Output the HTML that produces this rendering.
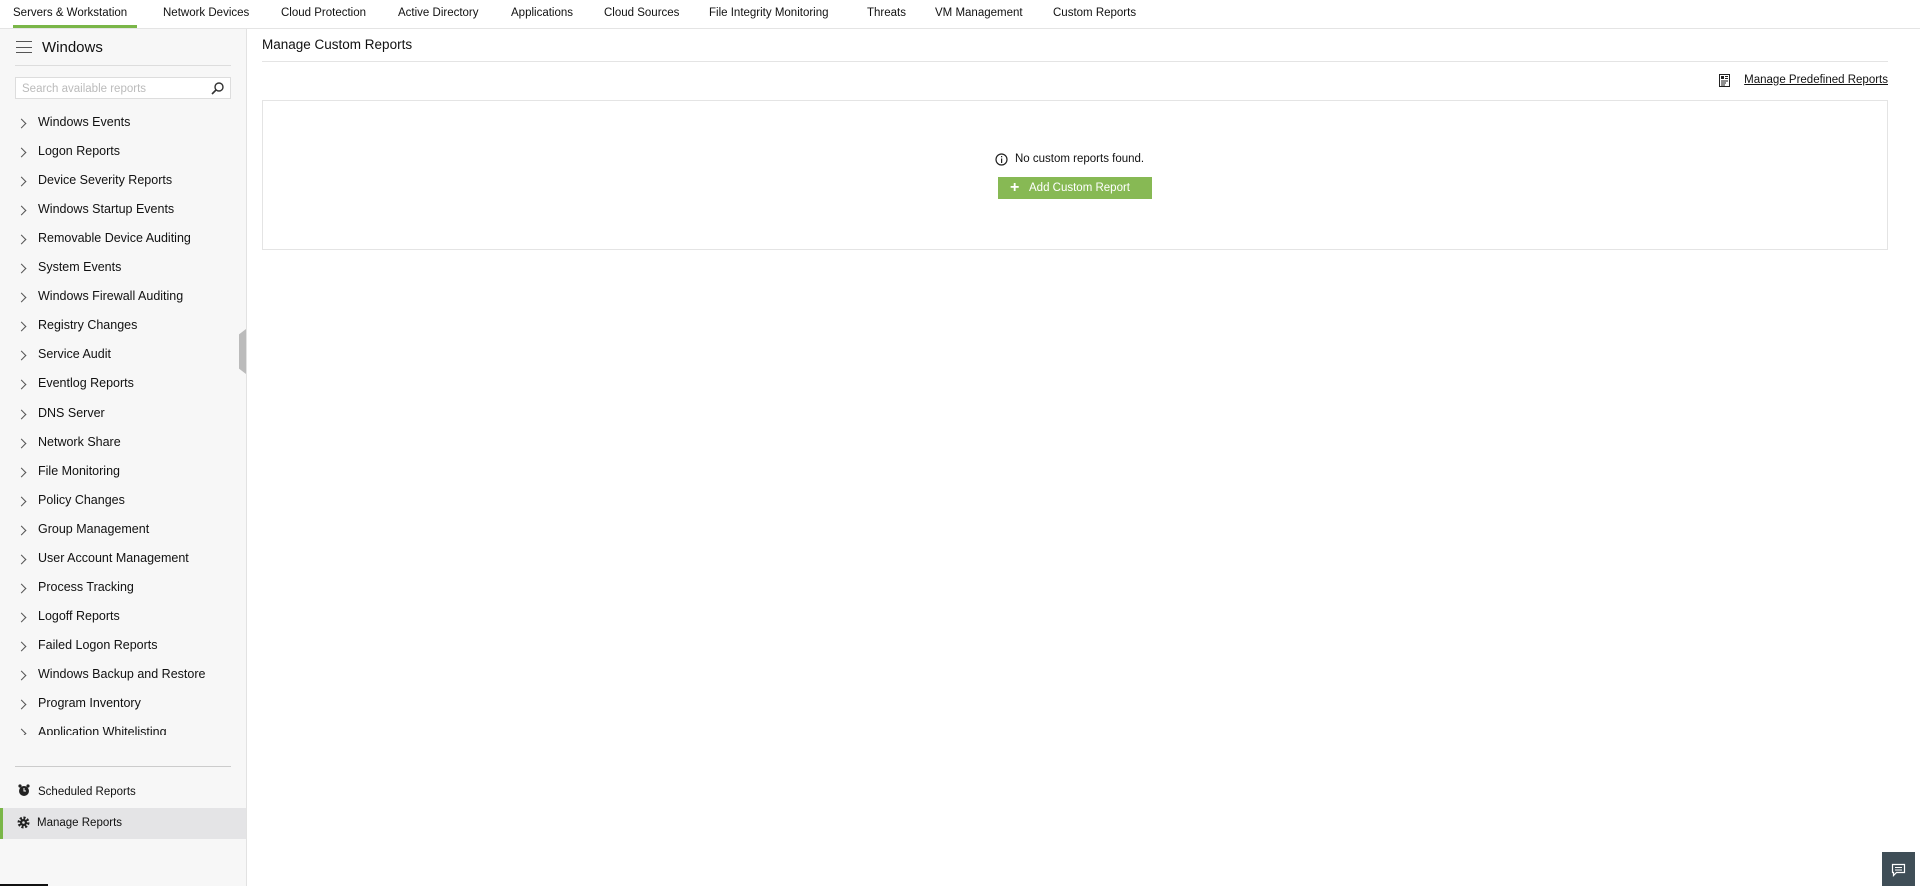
<!DOCTYPE html>
<html><head><meta charset="utf-8"><style>
*{margin:0;padding:0;box-sizing:border-box}
body{width:1920px;height:886px;overflow:hidden;background:#fff;font-family:"Liberation Sans",sans-serif;color:#111;position:relative}
.nav{position:absolute;left:0;top:0;width:1920px;height:29px;border-bottom:1px solid #e4e4e4;background:#fff}
.nav span{position:absolute;top:7px;font-size:11.5px;white-space:nowrap;color:#111}
.ul{position:absolute;left:13px;top:25px;width:124px;height:3px;background:#7ab648}
.side{position:absolute;left:0;top:29px;width:247px;height:857px;background:#f7f7f7;border-right:1px solid #e2e2e2}
.item{position:absolute;left:0;font-size:12.5px;white-space:nowrap}
.item i{position:absolute;left:18px;top:-2px;width:7px;height:7px;border-right:1px solid #555;border-top:1px solid #555;transform:rotate(45deg)}
.item b{font-weight:normal;position:absolute;left:38px;top:-7px}
.a{font-size:12px;position:absolute}
</style></head><body>
<div class="nav">
<span style="left:13px">Servers &amp; Workstation</span>
<span style="left:163px">Network Devices</span>
<span style="left:281px">Cloud Protection</span>
<span style="left:398px">Active Directory</span>
<span style="left:511px">Applications</span>
<span style="left:604px">Cloud Sources</span>
<span style="left:709px">File Integrity Monitoring</span>
<span style="left:867px">Threats</span>
<span style="left:935px">VM Management</span>
<span style="left:1053px">Custom Reports</span>
<div class="ul"></div>
</div>
<div class="side">
<div style="position:absolute;left:16px;top:12px;width:16px;height:12px;border-top:1px solid #555;border-bottom:1px solid #555"><div style="margin-top:5px;height:1px;background:#555"></div></div>
<div style="position:absolute;left:42px;top:10px;font-size:15px">Windows</div>
<div style="position:absolute;left:15px;top:36px;width:216px;height:1px;background:#ddd"></div>
<div style="position:absolute;left:15px;top:48px;width:216px;height:22px;background:#fff;border:1px solid #ddd;font-size:11.5px;color:#bbb;padding:5px 6px">Search available reports
<svg style="position:absolute;right:6px;top:4px" width="13" height="13" viewBox="0 0 13 13"><circle cx="8" cy="5" r="4" fill="none" stroke="#333" stroke-width="1.4"/><line x1="5" y1="8" x2="1" y2="12" stroke="#333" stroke-width="1.6"/></svg></div>
<div style="position:absolute;left:0;top:70px;width:246px;height:636px;overflow:hidden">
<div class="item" style="top:23px"><i></i><b>Windows Events</b></div>
<div class="item" style="top:52px"><i></i><b>Logon Reports</b></div>
<div class="item" style="top:81px"><i></i><b>Device Severity Reports</b></div>
<div class="item" style="top:110px"><i></i><b>Windows Startup Events</b></div>
<div class="item" style="top:139px"><i></i><b>Removable Device Auditing</b></div>
<div class="item" style="top:168px"><i></i><b>System Events</b></div>
<div class="item" style="top:197px"><i></i><b>Windows Firewall Auditing</b></div>
<div class="item" style="top:226px"><i></i><b>Registry Changes</b></div>
<div class="item" style="top:255px"><i></i><b>Service Audit</b></div>
<div class="item" style="top:284px"><i></i><b>Eventlog Reports</b></div>
<div class="item" style="top:314px"><i></i><b>DNS Server</b></div>
<div class="item" style="top:343px"><i></i><b>Network Share</b></div>
<div class="item" style="top:372px"><i></i><b>File Monitoring</b></div>
<div class="item" style="top:401px"><i></i><b>Policy Changes</b></div>
<div class="item" style="top:430px"><i></i><b>Group Management</b></div>
<div class="item" style="top:459px"><i></i><b>User Account Management</b></div>
<div class="item" style="top:488px"><i></i><b>Process Tracking</b></div>
<div class="item" style="top:517px"><i></i><b>Logoff Reports</b></div>
<div class="item" style="top:546px"><i></i><b>Failed Logon Reports</b></div>
<div class="item" style="top:575px"><i></i><b>Windows Backup and Restore</b></div>
<div class="item" style="top:604px"><i></i><b>Program Inventory</b></div>
<div class="item" style="top:633px"><i></i><b>Application Whitelisting</b></div>
</div>
<div style="position:absolute;left:15px;top:737px;width:216px;height:1px;background:#ccc"></div>
<svg style="position:absolute;left:18px;top:755px" width="12" height="13" viewBox="0 0 12 13"><circle cx="6" cy="7" r="5" fill="#222"/><circle cx="2" cy="2" r="1.6" fill="#222"/><circle cx="10" cy="2" r="1.6" fill="#222"/><path d="M6 4v3h2" stroke="#fff" fill="none"/></svg>
<div class="a" style="left:38px;top:757px;font-size:11.5px">Scheduled Reports</div>
<div style="position:absolute;left:0;top:779px;width:246px;height:31px;background:#e4e4e6;border-left:3px solid #7ab648"></div>
<svg style="position:absolute;left:17px;top:787px" width="13" height="13" viewBox="0 0 13 13"><circle cx="6.5" cy="6.5" r="4.5" fill="none" stroke="#222" stroke-width="3" stroke-dasharray="2 1.5"/><circle cx="6.5" cy="6.5" r="3.5" fill="#222"/><circle cx="6.5" cy="6.5" r="1.3" fill="#e4e4e6"/></svg>
<div class="a" style="left:37px;top:788px;font-size:11.5px">Manage Reports</div>
<div style="position:absolute;left:239px;top:300px;width:7px;height:45px;background:#bbb;clip-path:polygon(100% 0,100% 100%,0 88%,0 12%)"></div>
</div>
<div style="position:absolute;left:262px;top:37px;font-size:13.5px">Manage Custom Reports</div>
<div style="position:absolute;left:262px;top:61px;width:1626px;height:1px;background:#e4e4e4"></div>
<svg style="position:absolute;left:1719px;top:74px" width="11" height="13" viewBox="0 0 11 13"><rect x=".5" y=".5" width="10" height="12" fill="none" stroke="#222"/><rect x="2" y="2" width="3" height="3" fill="#222"/><path d="M6 2.5h3M6 4.5h3M2 7h7M2 9h5M2 11h4" stroke="#222"/></svg>
<div style="position:absolute;left:1737px;top:74px;width:151px;font-size:11.5px;text-decoration:underline;white-space:nowrap;text-align:right">Manage Predefined Reports</div>
<div style="position:absolute;left:262px;top:100px;width:1626px;height:150px;border:1px solid #e4e4e4"></div>
<svg style="position:absolute;left:995px;top:153px" width="13" height="13" viewBox="0 0 13 13"><circle cx="6.5" cy="6.5" r="5.5" fill="none" stroke="#222" stroke-width="1.2"/><rect x="6" y="5.5" width="1.2" height="4.5" fill="#222"/><rect x="6" y="3" width="1.2" height="1.3" fill="#222"/></svg>
<div style="position:absolute;left:1015px;top:153px;font-size:11.5px">No custom reports found.</div>
<div style="position:absolute;left:998px;top:177px;width:154px;height:22px;background:#87b954;color:#fff;font-size:11.5px;padding:5px 0 0 31px">Add Custom Report</div>
<div style="position:absolute;left:1010px;top:181px;color:#fff;font-size:16px;line-height:14px;font-weight:bold">+</div>
<div style="position:absolute;left:1882px;top:852px;width:33px;height:34px;background:#3f4e57"></div>
<svg style="position:absolute;left:1891px;top:863px" width="15" height="14" viewBox="0 0 15 14"><path d="M1.5 1.5h12v8h-8l-3 3v-3h-1z" fill="none" stroke="#fff" stroke-width="1.2"/><path d="M4 4.5h7M4 7h7" stroke="#fff"/></svg>
<div style="position:absolute;left:0;top:884px;width:48px;height:2px;background:#111"></div>
</body></html>
